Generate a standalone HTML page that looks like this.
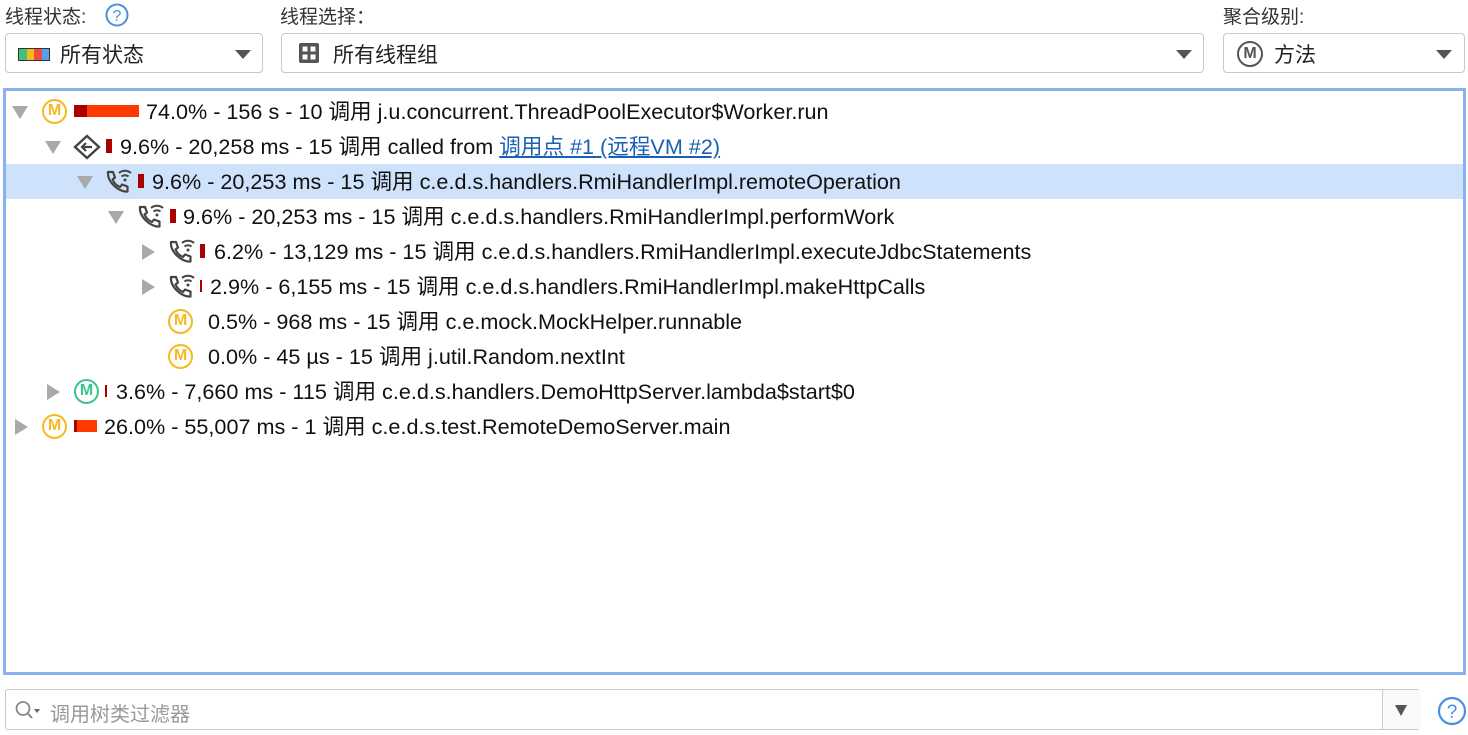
<!DOCTYPE html>
<html><head><meta charset="utf-8"><style>
body{margin:0;width:1468px;height:735px;background:#fff;font-family:"Liberation Sans","Noto Sans CJK SC",sans-serif;color:#111;position:relative;overflow:hidden}
.a{position:absolute;white-space:nowrap}
.lbl{font-size:19px;color:#333;top:2px}
.combo{position:absolute;top:33px;height:40px;border:1px solid #c8c8c8;border-radius:4px;background:#fff;box-sizing:border-box}
.combo .t{position:absolute;top:5px;font-size:21px;color:#222}
.dd{position:absolute;top:16px;width:0;height:0;border-left:8px solid transparent;border-right:8px solid transparent;border-top:9px solid #555}
.panel{position:absolute;left:3px;top:88px;width:1463px;height:587px;border:3px solid #8ab0ee;box-sizing:border-box;background:#fff}
.row{position:absolute;left:0;height:35px;font-size:21.6px;line-height:35px}
.tri{position:absolute;width:0;height:0}
.down{border-left:8px solid transparent;border-right:8px solid transparent;border-top:13px solid #a9a9a9}
.right{border-top:8px solid transparent;border-bottom:8px solid transparent;border-left:13px solid #a9a9a9}
.m{position:absolute;width:25px;height:25px;border:2.5px solid #f5b921;border-radius:50%;box-sizing:border-box;font-size:16px;font-weight:bold;color:#f5b921;text-align:center;line-height:20px}
.bar{position:absolute;height:12px}
a{color:#1a5fb4}
</style></head><body>
<div class="a lbl" style="left:5px">线程状态:</div>
<svg class="a" style="left:105px;top:3px" width="24" height="24"><circle cx="12" cy="12" r="10.5" fill="none" stroke="#4a90e2" stroke-width="2"/><text x="12" y="18" font-size="16" text-anchor="middle" fill="#4a90e2" font-family="Liberation Sans">?</text></svg>
<div class="a lbl" style="left:280px">线程选择：</div>
<div class="a lbl" style="left:1223px">聚合级别:</div>

<div class="combo" style="left:5px;width:258px">
<div class="a" style="left:12px;top:14px;width:30px;height:11px;border:1px solid #333;display:flex"><span style="flex:1;background:#3fc27a"></span><span style="flex:1;background:#f5b921"></span><span style="flex:1;background:#f04c3e"></span><span style="flex:1;background:#5b9ef0"></span></div>
<div class="t" style="left:54px">所有状态</div><div class="dd" style="left:229px"></div></div>

<div class="combo" style="left:281px;width:923px">
<svg class="a" style="left:16px;top:8px" width="22" height="22"><rect x="1" y="1" width="20" height="20" rx="2" fill="#555"/><rect x="4.5" y="4.5" width="5" height="5" fill="#fff"/><rect x="12.5" y="4.5" width="5" height="5" fill="#fff"/><rect x="4.5" y="12.5" width="5" height="5" fill="#fff"/><rect x="12.5" y="12.5" width="5" height="5" fill="#fff"/></svg>
<div class="t" style="left:51px">所有线程组</div><div class="dd" style="left:894px"></div></div>

<div class="combo" style="left:1223px;width:242px">
<div class="m" style="left:13px;top:7px;width:26px;height:26px;border-color:#555;color:#555;border-width:2.5px;line-height:21px;font-size:16px">M</div>
<div class="t" style="left:50px">方法</div><div class="dd" style="left:212px"></div></div>

<div class="panel">
<div style="position:absolute;left:0;top:73px;width:1457px;height:35px;background:#cfe2fb"></div>
</div>

<div class="row" style="top:94px;left:0;width:1468px">
<div class="tri down" style="left:12px;top:12px"></div>
<div class="m" style="left:42px;top:5px">M</div>
<div class="bar" style="left:74px;top:11px;width:13px;background:#a00"></div><div class="bar" style="left:87px;top:11px;width:52px;background:#ff3a00"></div>
<span class="a" style="left:146px">74.0% - 156 s - 10 调用 j.u.concurrent.ThreadPoolExecutor$Worker.run</span></div>

<div class="row" style="top:129px;width:1468px">
<div class="tri down" style="left:45px;top:12px"></div>
<svg class="a" style="left:73px;top:5px" width="28" height="26"><path d="M14 2 L26 13 L14 24 L2 13 Z" fill="none" stroke="#444" stroke-width="2.4"/><path d="M19 13 H9 M13 9 L9 13 L13 17" fill="none" stroke="#444" stroke-width="2.2"/></svg>
<div class="bar" style="left:106px;top:10px;width:6px;height:14px;background:#a00"></div>
<span class="a" style="left:120px">9.6% - 20,258 ms - 15 调用 called from <a style="text-decoration:underline">调用点 #1 (远程VM #2)</a></span></div>

<div class="row" style="top:164px;width:1468px">
<div class="tri down" style="left:77px;top:12px"></div>
<svg class="a" style="left:104px;top:4px" width="28" height="28"><path d="M4 4 L9 4 L11 9.5 L8.5 11.5 C10 15 12.5 17.5 16 19 L18 16.5 L23.5 18.5 L23.5 23.5 C15 24.5 3 14 4 4 Z" fill="none" stroke="#444" stroke-width="2.2" stroke-linejoin="round"/><path d="M15 5 A9 9 0 0 1 27 5 M17.5 8.5 A5.5 5.5 0 0 1 24.5 8.5" fill="none" stroke="#444" stroke-width="2"/><circle cx="21" cy="12" r="1.5" fill="#444"/></svg>
<div class="bar" style="left:138px;top:10px;width:6px;height:14px;background:#a00"></div>
<span class="a" style="left:152px">9.6% - 20,253 ms - 15 调用 c.e.d.s.handlers.RmiHandlerImpl.remoteOperation</span></div>

<div class="row" style="top:199px;width:1468px">
<div class="tri down" style="left:108px;top:12px"></div>
<svg class="a" style="left:136px;top:4px" width="28" height="28"><path d="M4 4 L9 4 L11 9.5 L8.5 11.5 C10 15 12.5 17.5 16 19 L18 16.5 L23.5 18.5 L23.5 23.5 C15 24.5 3 14 4 4 Z" fill="none" stroke="#444" stroke-width="2.2" stroke-linejoin="round"/><path d="M15 5 A9 9 0 0 1 27 5 M17.5 8.5 A5.5 5.5 0 0 1 24.5 8.5" fill="none" stroke="#444" stroke-width="2"/><circle cx="21" cy="12" r="1.5" fill="#444"/></svg>
<div class="bar" style="left:170px;top:10px;width:6px;height:14px;background:#a00"></div>
<span class="a" style="left:183px">9.6% - 20,253 ms - 15 调用 c.e.d.s.handlers.RmiHandlerImpl.performWork</span></div>

<div class="row" style="top:234px;width:1468px">
<div class="tri right" style="left:142px;top:10px"></div>
<svg class="a" style="left:167px;top:4px" width="28" height="28"><path d="M4 4 L9 4 L11 9.5 L8.5 11.5 C10 15 12.5 17.5 16 19 L18 16.5 L23.5 18.5 L23.5 23.5 C15 24.5 3 14 4 4 Z" fill="none" stroke="#444" stroke-width="2.2" stroke-linejoin="round"/><path d="M15 5 A9 9 0 0 1 27 5 M17.5 8.5 A5.5 5.5 0 0 1 24.5 8.5" fill="none" stroke="#444" stroke-width="2"/><circle cx="21" cy="12" r="1.5" fill="#444"/></svg>
<div class="bar" style="left:200px;top:10px;width:5px;height:14px;background:#a00"></div>
<span class="a" style="left:214px">6.2% - 13,129 ms - 15 调用 c.e.d.s.handlers.RmiHandlerImpl.executeJdbcStatements</span></div>

<div class="row" style="top:269px;width:1468px">
<div class="tri right" style="left:142px;top:10px"></div>
<svg class="a" style="left:167px;top:4px" width="28" height="28"><path d="M4 4 L9 4 L11 9.5 L8.5 11.5 C10 15 12.5 17.5 16 19 L18 16.5 L23.5 18.5 L23.5 23.5 C15 24.5 3 14 4 4 Z" fill="none" stroke="#444" stroke-width="2.2" stroke-linejoin="round"/><path d="M15 5 A9 9 0 0 1 27 5 M17.5 8.5 A5.5 5.5 0 0 1 24.5 8.5" fill="none" stroke="#444" stroke-width="2"/><circle cx="21" cy="12" r="1.5" fill="#444"/></svg>
<div class="bar" style="left:200px;top:11px;width:2px;height:12px;background:#a00"></div>
<span class="a" style="left:210px">2.9% - 6,155 ms - 15 调用 c.e.d.s.handlers.RmiHandlerImpl.makeHttpCalls</span></div>

<div class="row" style="top:304px;width:1468px">
<div class="m" style="left:168px;top:5px">M</div>
<span class="a" style="left:208px">0.5% - 968 ms - 15 调用 c.e.mock.MockHelper.runnable</span></div>

<div class="row" style="top:339px;width:1468px">
<div class="m" style="left:168px;top:5px">M</div>
<span class="a" style="left:208px">0.0% - 45 µs - 15 调用 j.util.Random.nextInt</span></div>

<div class="row" style="top:374px;width:1468px">
<div class="tri right" style="left:47px;top:10px"></div>
<div class="m" style="left:74px;top:5px;border-color:#3cc68a;color:#3cc68a">M</div>
<div class="bar" style="left:105px;top:11px;width:2px;height:12px;background:#a00"></div>
<span class="a" style="left:116px">3.6% - 7,660 ms - 115 调用 c.e.d.s.handlers.DemoHttpServer.lambda$start$0</span></div>

<div class="row" style="top:409px;width:1468px">
<div class="tri right" style="left:15px;top:10px"></div>
<div class="m" style="left:42px;top:5px">M</div>
<div class="bar" style="left:74px;top:11px;width:3px;background:#a00"></div><div class="bar" style="left:77px;top:11px;width:20px;background:#ff3a00"></div>
<span class="a" style="left:104px">26.0% - 55,007 ms - 1 调用 c.e.d.s.test.RemoteDemoServer.main</span></div>

<div class="a" style="left:5px;top:689px;width:1415px;height:41px;border:1px solid #c8c8c8;border-radius:3px;box-sizing:border-box;background:#fff">
<svg class="a" style="left:8px;top:10px" width="30" height="22"><circle cx="9" cy="8.5" r="6.5" fill="none" stroke="#888" stroke-width="1.8"/><path d="M13.5 13 L18 18" stroke="#888" stroke-width="2"/><path d="M20 9 L26 9 L23 13 Z" fill="#666"/></svg>
<span class="a" style="left:44px;top:8px;font-size:20px;color:#999">调用树类过滤器</span>
<div class="a" style="left:1376px;top:0;width:38px;height:39px;border-left:1px solid #ccc;background:#fafafa"><div class="dd" style="left:12px;top:15px;border-left-width:6px;border-right-width:6px;border-top-width:11px"></div></div>
</div>
<svg class="a" style="left:1437px;top:696px" width="30" height="30"><circle cx="15" cy="15" r="13" fill="none" stroke="#4a90e2" stroke-width="2.2"/><text x="15" y="22" font-size="19" text-anchor="middle" fill="#4a90e2" font-family="Liberation Sans">?</text></svg>
</body></html>
